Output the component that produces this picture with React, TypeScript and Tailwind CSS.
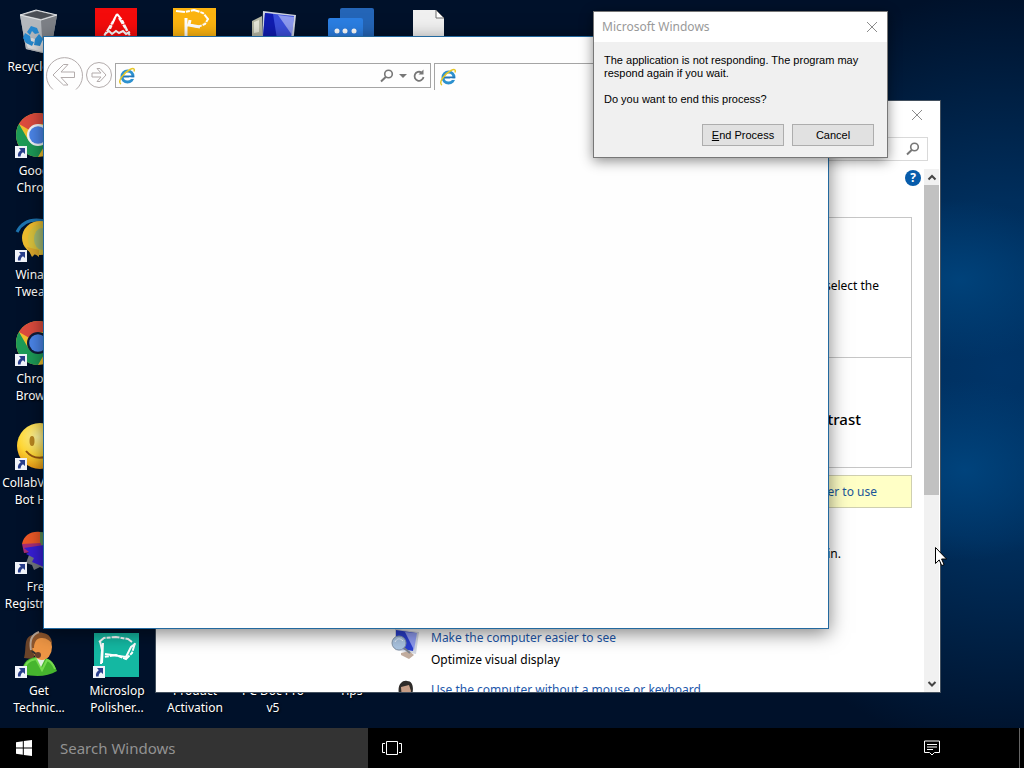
import type { ReactNode } from "react";

const uiFont = "font-['Comic_Sans_MS','Noto_Sans',sans-serif]";

function ShortcutArrow() {
  return (
    <svg viewBox="0 0 12 12" className="absolute bottom-0 left-0 h-3 w-3">
      <path d="M0 0h12v12H0z" fill="#f1f4fa" />
      <path d="M4 2h6v6L8 6.200C6.300 7.300 5.700 8.500 5.600 10.500H3C2.500 7.700 3.700 5.600 5.800 4.200z" fill="#293f8c" />
    </svg>
  );
}

function RecycleIcon() {
  return (
    <svg viewBox="0 0 48 48" className="h-12 w-12">
      <path d="M5 9l16-5 21 5-6 34-8 4-17-4z" fill="#a7aaaf" />
      <path d="M5 9l21 5 2 33-17-4z" fill="#b4b8bd" />
      <path d="M26 14l16-5-6 34-8 4z" fill="#7d8187" />
      <path d="M8 9l14-4 17 4-13 4z" fill="#4a4e55" />
      <path d="M5 9l16-5 21 5-16 5z" fill="none" stroke="#e2e4e6" />
      <path d="M10 34l7-2 8 3 11-3-3 11-5 3-15-4z" fill="#dcdcde" />
      <path d="M12 26l4-6 6 2 2 5-4 1-3-3-2 4zM10 27l5 3 1 5 3 1-2 4-6-3-3-5zM20 33l4-5 4 5-3 7-6-1z" fill="#2688ce" />
    </svg>
  );
}

function ChromeIcon({ dark = false }: { dark?: boolean }) {
  return (
    <svg viewBox="0 0 48 48" className="h-12 w-12">
      <circle cx="23" cy="25" r="22" fill="#f2c12f" />
      <path d="M23 25L4 14A22 22 0 0 1 42 14H23z" fill="#dd4b3e" />
      <path d="M4 14A22 22 0 0 0 23 47l9.500-16.500L13.500 30.500z" fill="#1d9b57" />
      <circle cx="23" cy="25" r="11" fill={dark ? "#101c38" : "#f4f7fa"} />
      <circle cx="23" cy="25" r="8.800" fill="#4c86ea" />
    </svg>
  );
}

function TweakerIcon() {
  return (
    <svg viewBox="0 0 48 48" className="h-12 w-12">
      <path d="M2 18C8 6 20 4 34 8" fill="none" stroke="#1d73ae" strokeWidth="3" />
      <ellipse cx="25" cy="24" rx="18" ry="17" fill="#eebd2e" />
      <ellipse cx="27" cy="25" rx="14" ry="15" fill="#d9c23c" />
      <ellipse cx="27" cy="25" rx="8" ry="11" fill="#a4bb73" />
      <path d="M12 33l5 10 3-3 4 3v-7z" fill="#dba82d" />
    </svg>
  );
}

function SmileyIcon() {
  return (
    <svg viewBox="0 0 48 48" className="h-12 w-12">
      <defs>
        <radialGradient id="smile" cx=".45" cy=".3" r=".75">
          <stop stopColor="#fff7a0" />
          <stop offset=".55" stopColor="#ffd735" />
          <stop offset="1" stopColor="#e48c0d" />
        </radialGradient>
      </defs>
      <circle cx="25" cy="24" r="23" fill="url(#smile)" />
      <ellipse cx="17" cy="19" rx="2.500" ry="5" fill="#b98620" />
      <ellipse cx="33" cy="19" rx="2.500" ry="5" fill="#b98620" />
      <path d="M11 29c7 9 20 9 28 0" fill="none" stroke="#965611" strokeWidth="2" />
    </svg>
  );
}

function RegistryIcon() {
  return (
    <svg viewBox="0 0 48 48" className="h-12 w-12">
      <path d="M14 29l-3 8 6 2 2 5 6-3 6 3V23z" fill="#71777d" />
      <path d="M25 6c12 0 18 8 17 18-2 8-9 14-17 15z" fill="#5b8d56" />
      <path d="M7 18C9 9 16 5 25 6v12z" fill="#ed5927" />
      <path d="M7 18l19-1v8l-17 2z" fill="#a72d78" />
      <path d="M9 22l20-3v22l-12-5 2-4-8-4 3-2z" fill="#371ed5" />
    </svg>
  );
}

function SupportIcon() {
  return (
    <svg viewBox="0 0 48 48" className="h-12 w-12">
      <path d="M17 5C8 8 12 18 9 28l9 1 5-14z" fill="#6a4329" />
      <path d="M7 44c0-10 4-15 13-17h8c8 2 11 7 14 14-10 6-22 6-35 3z" fill="#46b52e" />
      <path d="M9 40c1-7 5-10 12-11l6 11 5-10c4 1 6 4 8 9" fill="none" stroke="#74db4e" strokeWidth="2" />
      <path d="M21 27l5 10 5-10z" fill="#e5eee3" />
      <ellipse cx="27" cy="17" rx="10" ry="13" fill="#ee9645" />
      <path d="M16 18C13 7 20 1 28 3c6 1 9 5 9 11-3-5-7-6-11-6-4 0-7 4-7 10z" fill="#8d562d" />
      <path d="M16 20C14 9 18 4 24 2" fill="none" stroke="#b6a393" strokeWidth="2" />
      <path d="M17 21l5 4" stroke="#303030" strokeWidth="2" />
      <circle cx="23" cy="25" r="3" fill="#683e2b" />
    </svg>
  );
}

function RedTriangleIcon() {
  return (
    <svg viewBox="0 0 48 48" className="h-12 w-12">
      <path d="M2 2h42v44H2z" fill="#f40b0b" />
      <path d="M24 8l-5 9-8 13M24 8l5 6 8 16M22 12l-5 11M26 12l8 13" fill="none" stroke="#fff" strokeWidth="2" strokeDasharray="7 1 4 1" />
      <path d="M12 28l4-3 3 3 4-3 3 2 4-2 3 3 4-2" fill="none" stroke="#fff" strokeWidth="2" />
    </svg>
  );
}

function YellowScribbleIcon() {
  return (
    <svg viewBox="0 0 48 48" className="h-12 w-12">
      <path d="M2 2h43v44H2z" fill="#fcb410" />
      <path d="M5 5l9 1 9-2 9 3 5 6-3 5-7 3-8-2" fill="none" stroke="#fff" strokeWidth="2" strokeDasharray="9 1 4 1" />
      <path d="M15 12v18M19 14l-1 5 11 2" fill="none" stroke="#fff" strokeWidth="3" />
    </svg>
  );
}

function PolisherIcon() {
  return (
    <svg viewBox="0 0 48 48" className="h-12 w-12">
      <path d="M1 3h45v44H1z" fill="#14b8a2" />
      <path d="M6 12l5-4 12-1 12 2 4 3M42 13l-3 10-6 6-10-4-12 2" fill="none" stroke="#fff" strokeWidth="2" strokeDasharray="8 1 4 1" />
      <path d="M7 11l2 9-1 14M10 13l-1 20M12 24l21 3 5-10 4-3" fill="none" stroke="#fff" strokeWidth="2" />
    </svg>
  );
}

function MonitorIcon() {
  return (
    <svg viewBox="0 0 48 48" className="h-12 w-12">
      <path d="M3 15l10-5v30H3z" fill="#b7b9a6" />
      <path d="M5 16l5-2v12l-5 1z" fill="#e5e6d8" />
      <path d="M14 5l33 4-3 29-31-3z" fill="#ced3df" />
      <path d="M16 7l29 3-3 23-28-2z" fill="#3b4fdb" />
      <path d="M16 7l8 1 4 25-14-2z" fill="#101cb0" />
      <path d="M29 9l16 2-2 18z" fill="#8d9aef" />
    </svg>
  );
}

function ChatIcon() {
  return (
    <svg viewBox="0 0 48 48" className="h-12 w-12">
      <rect x="13" y="2" width="34" height="32" rx="2" fill="#2465b7" />
      <rect x="1" y="12" width="35" height="28" rx="2" fill="#2b7ee2" />
      <circle cx="10" cy="25" r="2.500" fill="#fff" />
      <circle cx="18" cy="25" r="2.500" fill="#fff" />
      <circle cx="27" cy="25" r="2.500" fill="#fff" />
    </svg>
  );
}

function PageIcon() {
  return (
    <svg viewBox="0 0 48 48" className="h-12 w-12">
      <path d="M8 4h23l8 8v34H8z" fill="#f0f0f0" />
      <path d="M31 4v8h8z" fill="#fff" stroke="#6d6d6d" />
    </svg>
  );
}

function IeIcon() {
  return (
    <svg viewBox="0 0 18 18" className="h-[18px] w-[18px] shrink-0">
      <circle cx="9.500" cy="9.500" r="5.500" fill="none" stroke="#2d91cf" strokeWidth="3" />
      <path d="M5 9.500h11" stroke="#2376b9" strokeWidth="2" />
      <path d="M11 11.200h6" stroke="#fff" strokeWidth="1.500" />
      <path d="M3 17C-1 15 5 6 12 2.500c4-2 5-.5 4 2" fill="none" stroke="#e5c629" strokeWidth="1.500" />
    </svg>
  );
}

function SearchIcon() {
  return (
    <svg viewBox="0 0 14 14" className="h-3.5 w-3.5 shrink-0" fill="none" stroke="#777">
      <circle cx="8.500" cy="5" r="3.800" strokeWidth="1.600" />
      <path d="M5.700 8L1 12.500" strokeWidth="2" />
    </svg>
  );
}

function CloseIcon() {
  return (
    <svg viewBox="0 0 12 12" className="h-3 w-3" fill="none" stroke="#8b8b8b">
      <path d="M1 1l10 10M11 1L1 11" />
    </svg>
  );
}

type Shortcut = {
  label: string[];
  cell: string;
  icon?: ReactNode;
  arrow?: boolean;
};

const shortcuts: Shortcut[] = [
  { label: ["Recycle Bin"], cell: "col-start-1 row-start-1", icon: <RecycleIcon /> },
  { label: [], cell: "col-start-2 row-start-1", icon: <RedTriangleIcon /> },
  { label: [], cell: "col-start-3 row-start-1", icon: <YellowScribbleIcon /> },
  { label: [], cell: "col-start-4 row-start-1", icon: <MonitorIcon /> },
  { label: [], cell: "col-start-5 row-start-1", icon: <ChatIcon /> },
  { label: [], cell: "col-start-6 row-start-1", icon: <PageIcon /> },
  { label: ["Google", "Chrome"], cell: "col-start-1 row-start-2", icon: <ChromeIcon />, arrow: true },
  { label: ["Winaero", "Tweaker"], cell: "col-start-1 row-start-3", icon: <TweakerIcon />, arrow: true },
  { label: ["Chrome", "Browser"], cell: "col-start-1 row-start-4", icon: <ChromeIcon dark />, arrow: true },
  { label: ["CollabVM B...", "Bot Help"], cell: "col-start-1 row-start-5", icon: <SmileyIcon />, arrow: true },
  { label: ["Free", "Registration"], cell: "col-start-1 row-start-6", icon: <RegistryIcon />, arrow: true },
  { label: ["Get", "Technic..."], cell: "col-start-1 row-start-7", icon: <SupportIcon />, arrow: true },
  { label: ["Microslop", "Polisher..."], cell: "col-start-2 row-start-7", icon: <PolisherIcon />, arrow: true },
  { label: ["Product", "Activation"], cell: "col-start-3 row-start-7" },
  { label: ["PC Doc Pro", "v5"], cell: "col-start-4 row-start-7" },
  { label: ["Tips"], cell: "col-start-5 row-start-7" },
];

function DesktopIcons() {
  return (
    <div className="grid auto-rows-[104px] grid-cols-[repeat(6,78px)] pt-1.5">
      {shortcuts.map(({ label, cell, icon, arrow }) => (
        <div key={cell} className={`flex flex-col items-center ${cell}`}>
          <div className="relative mb-1 h-12 w-12">
            {icon}
            {arrow && <ShortcutArrow />}
          </div>
          <div className="text-center text-xs leading-[17px] whitespace-nowrap text-white [text-shadow:1px_1px_2px_#000]">
            {label.map((line) => (
              <div key={line}>{line}</div>
            ))}
          </div>
        </div>
      ))}
    </div>
  );
}

function EaseWindow() {
  return (
    <section className="absolute top-[100px] left-[155px] flex h-[593px] w-[786px] flex-col border border-[#43505e] bg-white pr-px text-xs text-black">
      <header className="flex h-7 items-center justify-end pr-4">
        <button aria-label="Close window">
          <CloseIcon />
        </button>
      </header>
      {/* search box */}
      <div className="flex justify-end px-[11px] pt-2">
        <label className="flex h-6 w-52 items-center border border-[#d9d9d9] pr-[7px]">
          <input aria-label="Search Control Panel" className="min-w-0 flex-1 outline-none" />
          <SearchIcon />
        </label>
      </div>
      <div className="mt-2 flex min-h-0 flex-1">
        <div className="min-w-0 flex-1 overflow-hidden">
          <div className="flex h-12 justify-end pt-px pr-[3px]">
            <button aria-label="Help" className="flex h-4 w-4 items-center justify-center rounded-full bg-[#075cab] font-['Open_Sans',sans-serif] text-xs font-bold text-white">
              ?
            </button>
          </div>
          <div className="mr-3 ml-8 border border-[#c6c6c6] text-right">
            <div className="flex h-[140px] items-center justify-end border-b border-[#c6c6c6] pr-8 pb-1">
              select the
            </div>
            <div className="flex h-[109px] items-center justify-end pt-3 pr-[50px] text-[15px] font-medium">
              Contrast
            </div>
          </div>
          <div className="mt-[7px] mr-3 ml-8 flex h-[33px] items-center justify-end border border-[#cfcfb0] bg-[#ffffc6] pr-[34px]">
            <a href="#recommend" className="text-[#1b5599]">easier to use</a>
          </div>
          <p className="mt-9 pr-[83px] text-right leading-5">sign in.</p>
          {/* settings list */}
          <div className="mt-[63px] ml-[235px] flex gap-3">
            <svg viewBox="0 0 28 34" className="h-[34px] w-7 shrink-0">
              <path d="M4 2l24 3-3 22-21-4z" fill="#d2d7e2" />
              <path d="M5 3l20 3-3 18-17-3z" fill="#2a3fcf" />
              <path d="M14 5l12 1-3 17z" fill="#8f9cf1" />
              <path d="M10 26l8-2 5 4-5 4-8-4z" fill="#c2ad9f" />
              <circle cx="8" cy="16" r="7" fill="#abc5e2" stroke="#8496a9" />
              <path d="M4 15c2-4 5-4 8-1" fill="none" stroke="#edf5ff" />
              <path d="M13 21l6 5" stroke="#777f8c" strokeWidth="2" />
            </svg>
            <div className="leading-[22px]">
              <a href="#see" className="block text-[#1c57aa]">Make the computer easier to see</a>
              <p>Optimize visual display</p>
            </div>
          </div>
          <div className="mt-2 ml-[235px] flex gap-3">
            <svg viewBox="0 0 28 32" className="h-8 w-7 shrink-0">
              <path d="M8 15C6 6 11 1 16 2c6 0 7 7 5 14z" fill="#2e2b29" />
              <path d="M10 8l8-2 2 6-2 9h-7z" fill="#c69d86" />
            </svg>
            <a href="#keyboard" className="leading-[22px] text-[#1c57aa]">
              Use the computer without a mouse or keyboard
            </a>
          </div>
        </div>
        {/* scrollbar */}
        <div className="flex w-[15px] flex-col items-center bg-[#f1f1f1]">
          <svg viewBox="0 0 14 16" className="h-4 w-3.5 shrink-0" fill="none" stroke="#444" strokeWidth="2">
            <path d="M3.500 10.500L7 7l3.500 3.500" />
          </svg>
          <div className="h-[310px] w-full bg-[#c1c1c1]" />
          <svg viewBox="0 0 14 16" className="mt-auto h-4 w-3.5 shrink-0" fill="none" stroke="#444" strokeWidth="2">
            <path d="M3.500 6L7 9.500 10.500 6" />
          </svg>
        </div>
      </div>
    </section>
  );
}

function BrowserWindow() {
  return (
    <section className="absolute top-9 left-[43px] h-[593px] w-[786px] border border-[#23699f] bg-[#fefefe] [box-shadow:0_4px_18px_rgba(0,0,0,0.5)]">
      <div className="flex pt-[18px]">
        <button aria-label="Back" className="ml-px h-9 w-[38px]">
          <svg viewBox="0 0 38 36" className="h-9 w-[38px]" fill="none" stroke="#b3acac">
            <path d="M8 34.500A18 18 0 1 1 31 34.500" />
            <path d="M8 20L18.500 9.500H23L16 17h13.500v5.500H16L23 30h-4.500z" />
          </svg>
        </button>
        <button aria-label="Forward" className="mt-1.5 ml-0.5 h-7 w-7">
          <svg viewBox="0 0 28 28" className="h-7 w-7" fill="none" stroke="#b3acac">
            <circle cx="14" cy="14" r="12.500" />
            <path d="M21 14l-6-6.500h-3L16 12H7v4h9l-4 4.500h3z" />
          </svg>
        </button>
        <label className="mt-2 ml-0.5 flex h-[25px] w-[316px] items-center border border-[#a5a5a5] pr-1 pl-0.5">
          <IeIcon />
          <input aria-label="Address" className="min-w-0 flex-1 outline-none" />
          <SearchIcon />
          <svg viewBox="0 0 10 6" className="mx-1 h-1.5 w-2.5" fill="#777">
            <path d="M1 1h8L5 5z" />
          </svg>
          <svg viewBox="0 0 14 14" className="h-3.5 w-3.5" fill="none" stroke="#777" strokeWidth="1.800">
            <path d="M9.500 3.500A4.500 4.500 0 1 0 11.500 8" />
            <path d="M6.500 5.500h5v-5z" fill="#777" stroke="none" />
          </svg>
        </label>
        <div className="mt-2 ml-[3px] flex h-[27px] flex-1 items-center border-t border-l border-[#a5a5a5] pl-1">
          <IeIcon />
        </div>
      </div>
    </section>
  );
}

function NotRespondingDialog() {
  return (
    <section
      role="dialog"
      aria-label="Microsoft Windows"
      className="absolute top-[11px] left-[593px] w-[295px] border border-[#777] bg-[#f0f0f0] [box-shadow:0_3px_12px_rgba(0,0,0,0.45)]"
    >
      <header className="flex h-[30px] items-center justify-between bg-white pr-[9px] pl-2 text-xs text-[#999]">
        <h1>Microsoft Windows</h1>
        <button aria-label="Close">
          <CloseIcon />
        </button>
      </header>
      <div className="px-2.5 pt-3 pb-[11px] font-['Tahoma','Liberation_Sans',sans-serif] text-[11px] leading-[13px] text-black">
        <p>
          The application is not responding. The program may
          <br />
          respond again if you wait.
        </p>
        <p className="mt-[13px]">Do you want to end this process?</p>
        <div className="mt-[18px] flex justify-end gap-2 pr-[3px]">
          <button className="h-[22px] w-[82px] border border-[#adadad] bg-[#e1e1e1]">
            <span className="underline">E</span>nd Process
          </button>
          <button className="h-[22px] w-[82px] border border-[#adadad] bg-[#e1e1e1]">Cancel</button>
        </div>
      </div>
    </section>
  );
}

function Taskbar() {
  return (
    <footer className="flex h-10 shrink-0 items-center bg-black">
      <button aria-label="Start" className="flex h-10 w-12 items-center justify-center">
        <svg viewBox="0 0 16 16" className="h-4 w-4" fill="#fff">
          <path d="M0 2.300l6.800-1v6.200H0zM7.800 1.100L16 0v7.500H7.800zM0 8.500h6.800v6.200L0 13.700zM7.800 8.500H16V16l-8.200-1.100z" />
        </svg>
      </button>
      <input
        aria-label="Search Windows"
        placeholder="Search Windows"
        className="h-10 w-80 bg-[#333] px-3 text-[15px] text-white outline-none placeholder:text-[#929292]"
      />
      <button aria-label="Task View" className="ml-3.5 h-4">
        <svg viewBox="0 0 20 16" className="h-4 w-5" fill="none" stroke="#fff">
          <path d="M4.500 1.500h11v13h-11zM3 3.500H.5v9H3M17 3.500h2.500v9H17" />
        </svg>
      </button>
      <button aria-label="Notifications" className="mr-[79px] ml-auto h-4">
        <svg viewBox="0 0 16 16" className="h-4 w-4" fill="none" stroke="#fff">
          <path d="M.5 1h15v11.500h-5L8 15l-2.500-2.500h-5zM3 4.500h10M3 7h10M3 9.500h6" />
        </svg>
      </button>
      <button aria-label="Show desktop" className="h-10 w-[5px] border-l border-[#666]" />
    </footer>
  );
}

export default function App() {
  return (
    <div className={`flex h-screen flex-col overflow-hidden bg-[#00112a] ${uiFont}`}>
      <main className="relative min-h-0 flex-1 overflow-hidden bg-[radial-gradient(ellipse_120px_80px_at_960px_280px,#00427a_0%,transparent_100%),radial-gradient(ellipse_120px_90px_at_965px_470px,#00437c_0%,transparent_100%),radial-gradient(ellipse_320px_380px_at_1000px_370px,#003468_0%,#002e5c_45%,#00112a_100%)]">
        <DesktopIcons />
        <EaseWindow />
        <BrowserWindow />
        <NotRespondingDialog />
        {/* mouse pointer */}
        <svg viewBox="0 0 12 20" className="absolute top-[547px] left-[935px] h-5 w-3">
          <path d="M.5.500v16l3.700-3.600 2.500 5.700 2.400-1-2.500-5.600h5z" fill="#fff" stroke="#000" />
        </svg>
      </main>
      <Taskbar />
    </div>
  );
}
